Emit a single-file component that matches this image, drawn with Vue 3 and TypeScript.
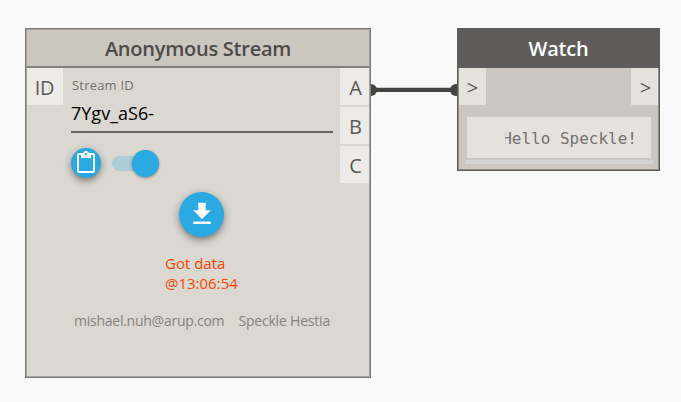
<script setup lang="ts">
const outputs: string[] = ['A', 'B', 'C']
const streamId = '7Ygv_aS6-'
</script>

<template>
  <main class="canvas">
    <svg class="wire" width="92" height="16" viewBox="0 0 92 16">
      <path d="M2 5.5H89" stroke="#c9c9c7" stroke-width="1" />
      <path d="M2 8H89" stroke="#444442" stroke-width="4" />
      <circle cx="2" cy="8" r="6" fill="#444442" />
      <circle cx="87" cy="8" r="6" fill="#444442" />
    </svg>

    <section class="node stream">
      <header class="title"><span>Anonymous Stream</span></header>
      <div class="body">
        <div class="port input">ID</div>
        <div class="content">
          <label class="label">Stream ID</label>
          <div class="field">{{ streamId }}</div>
          <div class="controls">
            <button class="round copy" aria-label="Copy">
              <svg width="24" height="24" viewBox="0 0 24 24">
                <path fill="#fff" d="M19 2h-4.18C14.4.84 13.3 0 12 0c-1.3 0-2.4.84-2.82 2H5c-1.1 0-2 .9-2 2v16c0 1.1.9 2 2 2h14c1.1 0 2-.9 2-2V4c0-1.1-.9-2-2-2zm-7 0c.55 0 1 .45 1 1s-.45 1-1 1-1-.45-1-1 .45-1 1-1zm7 18H5V4h2v3h10V4h2v16z" />
              </svg>
            </button>
            <div class="switch"><i class="thumb"></i></div>
          </div>
          <button class="round download" aria-label="Download">
            <svg width="30" height="30" viewBox="0 0 24 24">
              <path fill="#fff" d="M19 9h-4V3H9v6H5l7 7 7-7zM5 18v2h14v-2H5z" />
            </svg>
          </button>
          <p class="status">Got data<br />@13:06:54</p>
          <div class="account"><span class="mail">mishael.nuh@arup.com</span><span class="server">Speckle Hestia</span></div>
        </div>
        <div class="outputs">
          <div v-for="name in outputs" :key="name" class="port">{{ name }}</div>
        </div>
      </div>
    </section>

    <section class="node watch">
      <header class="title"><span>Watch</span></header>
      <div class="ports">
        <div class="port">&gt;</div>
        <div class="port">&gt;</div>
      </div>
      <div class="value"><span class="clip"><span class="text">Hello Speckle!</span></span></div>
      <div class="grip"></div>
    </section>
  </main>
</template>

<style>
body { background: #f9f9f9; }
</style>

<style scoped>
.canvas {
  position: relative;
  width: 681px;
  height: 402px;
  overflow: hidden;
  background: #f9f9f9;
  font-family: "Open Sans", "Noto Sans", sans-serif;
}
.canvas * { box-sizing: border-box; }
.node { position: absolute; top: 28px; }
.wire { position: absolute; left: 369px; top: 82px; }
.title {
  display: flex;
  align-items: center;
  justify-content: center;
  font-size: 20px;
  font-weight: 600;
  letter-spacing: -0.25px;
  line-height: 38px;
  white-space: nowrap;
}
.port {
  display: flex;
  align-items: center;
  justify-content: center;
  height: 37px;
  padding: 2px 0 0 2px;
  background: #ecebe8;
  color: #5b5957;
  font-size: 20px;
}
.stream {
  left: 25px;
  width: 346px;
  height: 350px;
  border: 1px solid #7d7c7b;
  box-shadow: inset 0 0 0 1px #a5a29f;
  background: #dbd8d1;
}
.stream .title {
  height: 39px;
  padding-top: 2px;
  border: 1px solid #a5a29f;
  border-bottom: 2px solid #838180;
  background: #cbc6be;
  color: #4d4b49;
}
.body { display: flex; padding: 0 1px; }
.input { width: 36px; padding-left: 0; padding-right: 1px; letter-spacing: -0.4px; }
.content {
  display: flex;
  flex-direction: column;
  width: 262px;
  margin: 0 7px 0 8px;
}
.label {
  padding: 8px 0 1px 1px;
  color: #74716f;
  font-size: 13px;
  letter-spacing: 0.2px;
  line-height: 18px;
}
.field {
  height: 38px;
  border-bottom: 2px solid #6a6663;
  color: #000;
  font-size: 18px;
  line-height: 37px;
}
.controls { display: flex; align-items: center; gap: 11px; margin-top: 15px; }
.round {
  display: flex;
  align-items: center;
  justify-content: center;
  flex: none;
  padding: 0;
  border: 0;
  border-radius: 50%;
  background: #2aa9e3;
  box-shadow: 0 3px 5px -1px #0003, 0 4px 8px #0003, 0 1px 10px #0002;
}
.copy { width: 30px; height: 30px; padding-bottom: 1px; }
.switch {
  display: flex;
  align-items: center;
  justify-content: flex-end;
  width: 47px;
  height: 15px;
  border-radius: 8px;
  background: #adccd6;
}
.thumb {
  flex: none;
  width: 27px;
  height: 27px;
  border-radius: 50%;
  background: #2aa9e3;
  box-shadow: 0 1px 3px #0006;
}
.download { width: 45px; height: 45px; margin: 14px 0 0 108px; padding-bottom: 2px; }
.status {
  margin: 16px 0 0 94px;
  color: #ff4500;
  font-size: 15px;
  line-height: 20px;
}
.account {
  display: flex;
  justify-content: space-between;
  margin: 18px 3px 0;
  color: #858381;
  font-size: 14px;
  line-height: 20px;
  white-space: nowrap;
}
.mail { letter-spacing: -0.25px; }
.server { letter-spacing: -0.2px; }
.outputs { display: flex; flex-direction: column; gap: 2px; width: 29px; }
.watch {
  left: 457px;
  width: 203px;
  height: 143px;
  border: 1px solid #5e5c5a;
  box-shadow: inset 0 0 0 1px #918e8a;
  background: #cbc6bf;
}
.watch .title { height: 39px; padding-top: 1px; background: #5e5c5a; color: #fff; }
.ports { display: flex; justify-content: space-between; padding: 0 1px; }
.ports .port { width: 27px; padding-left: 0; background: #e5e2dd; }
.ports .port:last-child { padding-left: 2px; }
.value {
  display: flex;
  justify-content: flex-end;
  align-items: center;
  height: 41px;
  margin: 12px 8px 0 9px;
  padding: 2px 14px 0 0;
  background: #e5e2dd;
}
.clip {
  display: flex;
  justify-content: flex-end;
  width: 132px;
  overflow: hidden;
}
.text {
  flex: none;
  color: #74716e;
  font: 16px/24px "DejaVu Sans Mono", monospace;
}
.grip { height: 4px; margin: 2px 6px 0 7px; background: #d4d4d4; }
</style>
